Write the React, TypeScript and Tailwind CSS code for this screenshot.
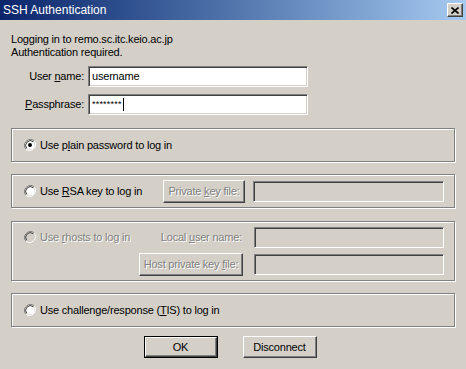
import React from 'react';

const font = { fontFamily: '"Liberation Sans", Arial, sans-serif' };

const Radio = ({ checked = false, disabled = false }: { checked?: boolean; disabled?: boolean }) => (
  <svg width="12" height="12" viewBox="0 0 12 12" className="shrink-0">
    <path d="M10.2 1.8 A6 6 0 0 0 1.8 10.2" fill="none" stroke="#808080" strokeWidth="1" />
    <path d="M1.8 10.2 A6 6 0 0 0 10.2 1.8" fill="none" stroke="#ffffff" strokeWidth="1" />
    <circle cx="6" cy="6" r="4.6" fill={disabled ? '#d4d0c8' : '#ffffff'} />
    <path d="M9.3 2.7 A4.7 4.7 0 0 0 2.7 9.3" fill="none" stroke="#404040" strokeWidth="1" />
    {checked && <circle cx="6" cy="6" r="2" fill="#000" />}
  </svg>
);

const Field = ({ children, className = '', disabled = false }: { children?: React.ReactNode; className?: string; disabled?: boolean }) => (
  <div
    className={`h-[21px] border-t border-l border-[#808080] border-b-white border-r-white border-b border-r shadow-[inset_1px_1px_0_#404040,inset_-1px_-1px_0_#d4d0c8] px-[3px] flex items-center text-[11px] text-black whitespace-nowrap ${disabled ? 'bg-[#d4d0c8]' : 'bg-white'} ${className}`}
  >
    {children}
  </div>
);

const Btn = ({ children, className = '', disabled = false }: { children: React.ReactNode; className?: string; disabled?: boolean }) => (
  <div
    className={`flex items-center justify-center whitespace-nowrap bg-[#d4d0c8] border-t border-l border-white border-b border-r border-b-[#404040] border-r-[#404040] shadow-[inset_-1px_-1px_0_#808080] text-[11px] ${disabled ? 'text-[#808080] [text-shadow:1px_1px_0_#fff]' : 'text-black'} ${className}`}
  >
    <span>{children}</span>
  </div>
);

const Group = ({ children, className = '' }: { children: React.ReactNode; className?: string }) => (
  <div className={`mx-[11px] border border-[#808080] shadow-[inset_1px_1px_0_#fff,1px_1px_0_#fff] whitespace-nowrap text-[11px] ${className}`}>{children}</div>
);

export default function App() {
  return (
    <div className="w-[466px] h-[369px] bg-[#d4d0c8] flex flex-col overflow-hidden text-black tracking-[-0.2px]" style={font}>
      <div className="h-[20px] shrink-0 bg-gradient-to-r from-[#0a246a] to-[#a6caf0] flex items-center justify-between pl-[3px] pr-[3px]">
        <span className="text-white text-[12px] leading-none tracking-normal">SSH Authentication</span>
        <div className="w-[16px] h-[14px] bg-[#d4d0c8] border-t border-l border-white border-b border-r border-b-[#404040] border-r-[#404040] shadow-[inset_-1px_-1px_0_#808080] flex items-center justify-center">
          <svg width="8" height="7" viewBox="0 0 8 7">
            <path d="M0.5 0.5 L7.5 6.5 M7.5 0.5 L0.5 6.5" stroke="#000" strokeWidth="1.6" />
          </svg>
        </div>
      </div>

      <div className="pl-[11px] pt-[13px] text-[11px] leading-[13px]">
        <div>Logging in to remo.sc.itc.keio.ac.jp</div>
        <div>Authentication required.</div>
      </div>

      <div className="grid grid-cols-[84px_220px] gap-x-[4px] gap-y-[7px] items-center mt-[7px] text-[11px] whitespace-nowrap">
        <div className="text-right">
          User <span className="underline">n</span>ame:
        </div>
        <Field>username</Field>
        <div className="text-right">
          <span className="underline">P</span>assphrase:
        </div>
        <Field>
          <span className="text-[9px] tracking-[0.2px]">********</span>
          <span className="w-px h-[13px] bg-black ml-[1px]" />
        </Field>
      </div>

      <Group className="mt-[13px] h-[34px] flex items-center pl-[12px] gap-[4px]">
        <Radio checked />
        <span>
          Use p<span className="underline">l</span>ain password to log in
        </span>
      </Group>

      <Group className="mt-[12px] h-[34px] flex items-center pl-[12px] pr-[10px]">
        <Radio />
        <span className="ml-[4px] w-[123px]">
          Use <span className="underline">R</span>SA key to log in
        </span>
        <Btn disabled className="w-[82px] h-[23px]">
          Private <span className="underline">k</span>ey file:
        </Btn>
        <Field disabled className="ml-[8px] flex-1" />
      </Group>

      <Group className="mt-[13px] h-[60px] flex flex-col justify-center gap-[5px] pl-[12px] pr-[10px]">
        <div className="flex items-center">
          <Radio disabled />
          <span className="ml-[4px] text-[#808080] [text-shadow:1px_1px_0_#fff]">
            Use <span className="underline">r</span>hosts to log in
          </span>
          <span className="ml-auto text-[#808080] [text-shadow:1px_1px_0_#fff]">
            Local <span className="underline">u</span>ser name:
          </span>
          <Field disabled className="ml-[12px] w-[190px]" />
        </div>
        <div className="flex items-center justify-end">
          <Btn disabled className="w-[104px] h-[23px]">
            Host private key <span className="underline">f</span>ile:
          </Btn>
          <Field disabled className="ml-[11px] w-[190px]" />
        </div>
      </Group>

      <Group className="mt-[12px] h-[34px] flex items-center pl-[12px] gap-[4px]">
        <Radio />
        <span>
          Use challenge/response (<span className="underline">T</span>IS) to log in
        </span>
      </Group>

      <div className="flex justify-center gap-[25px] mt-[9px] pr-[6px] text-[11px]">
        <div className="border border-black">
          <Btn className="w-[72px] h-[20px]">OK</Btn>
        </div>
        <Btn className="w-[74px] h-[22px]">Disconnect</Btn>
      </div>
    </div>
  );
}
